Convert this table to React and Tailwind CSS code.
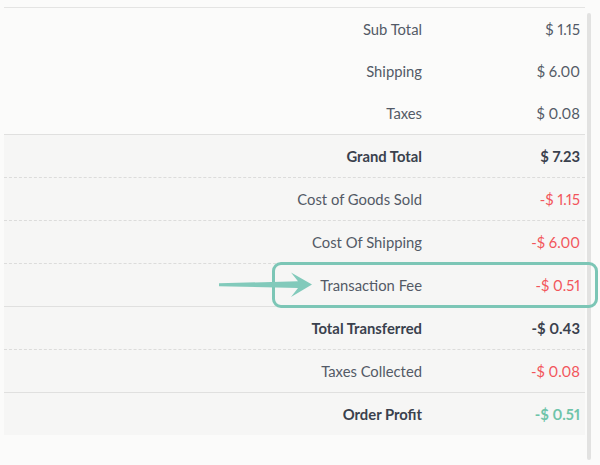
import React from "react";

const rowsTop = [
  { label: "Sub Total", value: "$ 1.15" },
  { label: "Shipping", value: "$ 6.00" },
  { label: "Taxes", value: "$ 0.08" },
];

function Row({ label, value, bold, valueClass, borderClass }) {
  return (
    <div className={"flex items-center " + (borderClass ? "h-[43px] " + borderClass : "h-[42px]")}>
      <div
        className={
          "w-[418px] text-right text-[14.8px] " +
          (bold ? "font-bold text-[#3a414d]" : "text-[#535a66]")
        }
      >
        {label}
      </div>
      <div
        className={
          "w-[158px] text-right text-[14.8px] proportional-nums " +
          (bold ? "font-bold " : "") +
          (valueClass || (bold ? "text-[#3a414d]" : "text-[#535a66]"))
        }
      >
        {value}
      </div>
    </div>
  );
}

export default function App() {
  return (
    <div
      className="w-[600px] h-[465px] bg-[#fbfbfa] flex relative overflow-hidden"
      style={{ fontFamily: "Lato, 'Liberation Sans', sans-serif" }}
    >
      <div className="w-[581px] ml-[4px] mt-[7px] flex flex-col">
        <div className="border-t border-[#e4e4e3]">
          {rowsTop.map((r) => (
            <Row key={r.label} label={r.label} value={r.value} />
          ))}
        </div>
        <div className="bg-[#f6f6f5] border-t border-[#e0e0df]">
          <Row label="Grand Total" value="$ 7.23" bold borderClass="border-b border-dashed border-[#dcdcdb]" />
          <Row label="Cost of Goods Sold" value="-$ 1.15" valueClass="text-[#f2555b]" borderClass="border-b border-dashed border-[#dcdcdb]" />
          <Row label="Cost Of Shipping" value="-$ 6.00" valueClass="text-[#f2555b]" borderClass="border-b border-dashed border-[#dcdcdb]" />
          <Row label="Transaction Fee" value="-$ 0.51" valueClass="text-[#f2555b]" borderClass="border-b border-[#e0e0df]" />
          <Row label="Total Transferred" value="-$ 0.43" bold borderClass="border-b border-dashed border-[#dcdcdb]" />
          <Row label="Taxes Collected" value="-$ 0.08" valueClass="text-[#f2555b]" borderClass="border-b border-[#e0e0df]" />
          <Row label="Order Profit" value="-$ 0.51" bold valueClass="text-[#6ec4a9]" />
        </div>
      </div>
      <div className="w-[4px] ml-[2px] mt-[13px] h-[447px] bg-[#e2e2e1] rounded-full" />

      <div className="absolute left-[272px] top-[262px] w-[326px] h-[46px] border-[3px] border-[#7cc6b6] rounded-[9px]" />
      <svg
        className="absolute left-0 top-0"
        width="600"
        height="465"
        viewBox="0 0 600 465"
      >
        <path
          d="M219 283.3 L298 281.3 L291 272.5 L312 284.5 L291 297 L298 288 L219 286.2 Z"
          fill="#82cabb"
        />
      </svg>
    </div>
  );
}
